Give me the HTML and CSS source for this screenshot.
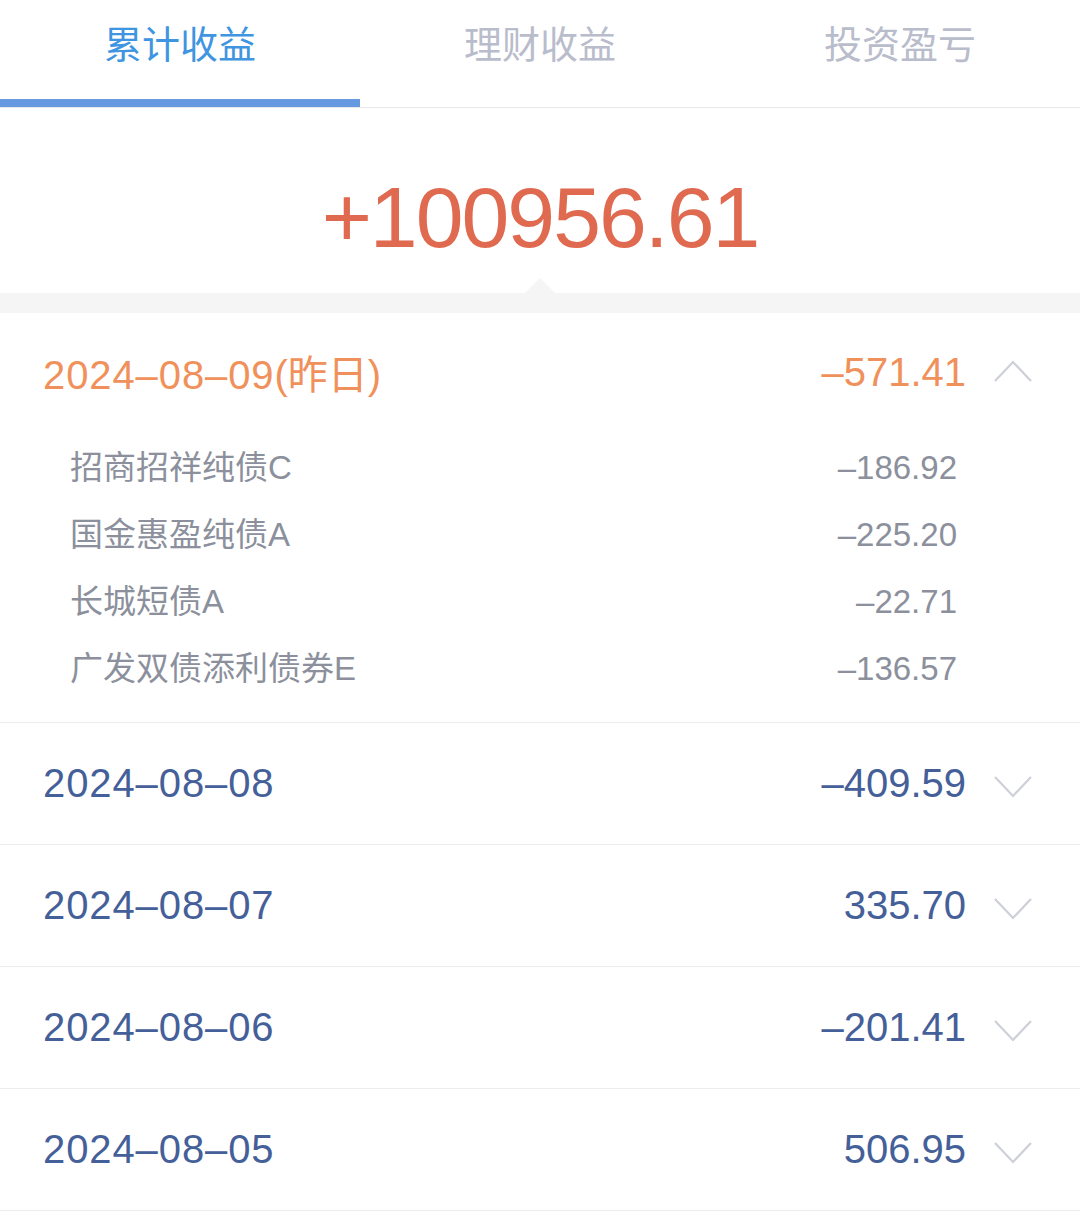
FILE: index.html
```html
<!DOCTYPE html>
<html>
    <head>
        <meta charset="utf-8">
        <title>累计收益</title>
        <link rel="stylesheet" href="styles.css">
    </head>
    <body>
        <div class="tabs">
            <div class="tab active">累计收益</div>
            <div class="tab">理财收益</div>
            <div class="tab">投资盈亏</div>
        </div>

        <div class="hero">
            <div class="total">+100956.61</div>
        </div>
        <div class="band"><span class="notch"></span></div>

        <div class="day open">
            <div class="day-head">
                <span class="date">2024–08–09<span class="cn">(昨日)</span></span>
                <span class="amount">–571.41</span>
                <svg class="chev" width="38" height="22" viewBox="0 0 38 22"><path d="M1 21 L19 2 L37 21" fill="none" stroke="#cdd0d8" stroke-width="2.2"/></svg>
            </div>
            <div class="funds">
                <div class="fund"><span>招商招祥纯债C</span><span>–186.92</span></div>
                <div class="fund"><span>国金惠盈纯债A</span><span>–225.20</span></div>
                <div class="fund"><span>长城短债A</span><span>–22.71</span></div>
                <div class="fund"><span>广发双债添利债券E</span><span>–136.57</span></div>
            </div>
        </div>

        <div class="day">
            <div class="day-head">
                <span class="date">2024–08–08</span>
                <span class="amount">–409.59</span>
                <svg class="chev" width="38" height="22" viewBox="0 0 38 22"><path d="M1 1 L19 20 L37 1" fill="none" stroke="#cdd0d8" stroke-width="2.2"/></svg>
            </div>
        </div>
        <div class="day">
            <div class="day-head">
                <span class="date">2024–08–07</span>
                <span class="amount">335.70</span>
                <svg class="chev" width="38" height="22" viewBox="0 0 38 22"><path d="M1 1 L19 20 L37 1" fill="none" stroke="#cdd0d8" stroke-width="2.2"/></svg>
            </div>
        </div>
        <div class="day">
            <div class="day-head">
                <span class="date">2024–08–06</span>
                <span class="amount">–201.41</span>
                <svg class="chev" width="38" height="22" viewBox="0 0 38 22"><path d="M1 1 L19 20 L37 1" fill="none" stroke="#cdd0d8" stroke-width="2.2"/></svg>
            </div>
        </div>
        <div class="day">
            <div class="day-head">
                <span class="date">2024–08–05</span>
                <span class="amount">506.95</span>
                <svg class="chev" width="38" height="22" viewBox="0 0 38 22"><path d="M1 1 L19 20 L37 1" fill="none" stroke="#cdd0d8" stroke-width="2.2"/></svg>
            </div>
        </div>
    </body>
</html>
```

FILE: styles.css
```css
body {
    margin: 0;
    background: #fff;
    font-family: "Liberation Sans", "Noto Sans CJK SC", sans-serif;
}
.tabs {
    display: flex;
    border-bottom: 1px solid #e8e8ea;
}
.tab {
    flex: 1;
    height: 90px;
    line-height: 90px;
    padding-bottom: 9px;
    border-bottom: 8px solid transparent;
    text-align: center;
    font-size: 38px;
    color: #b9bccb;
}
.tab.active {
    color: #3f95e0;
    border-bottom-color: #6699e0;
}
.hero {
    padding: 59px 0 26px;
    text-align: center;
}
.total {
    line-height: 100px;
    font-size: 86px;
    letter-spacing: -2px;
    color: #e06a50;
}
.band {
    position: relative;
    height: 20px;
    background: #f5f5f5;
}
.notch {
    position: absolute;
    left: 525px;
    top: -15px;
    width: 0;
    height: 0;
    border-left: 15px solid transparent;
    border-right: 15px solid transparent;
    border-bottom: 15px solid #f5f5f5;
}
.day {
    border-bottom: 1px solid #ececee;
}
.day-head {
    box-sizing: border-box;
    display: flex;
    align-items: center;
    height: 121px;
    padding: 0 48px 0 43px;
    font-size: 40px;
    color: #455f99;
}
.day-head .date {
    flex: 1;
    letter-spacing: 0.9px;
}
.day-head .date .cn {
    letter-spacing: 0;
}
.day-head .chev {
    margin-left: 28px;
    margin-top: 6px;
}
.day.open .day-head {
    height: 124px;
    padding-bottom: 6px;
    color: #f0915b;
}
.day.open .day-head .chev {
    margin-top: -2px;
}
.funds {
    margin-top: -3px;
    padding-bottom: 20px;
}
.fund {
    display: flex;
    justify-content: space-between;
    height: 67px;
    line-height: 67px;
    padding: 0 123px 0 70px;
    font-size: 33px;
    color: #8b909c;
}
```
